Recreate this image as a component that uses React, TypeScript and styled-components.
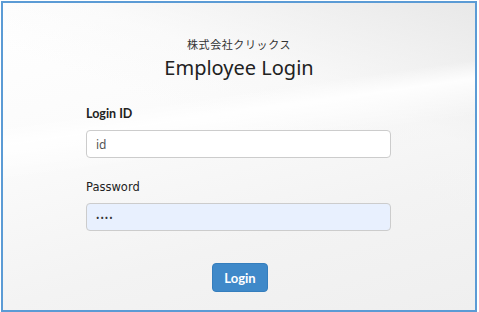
import React from "react";
import styled, {createGlobalStyle} from "styled-components";

const GlobalStyle = createGlobalStyle`
  html, body {
    margin: 0;
    padding: 0;
    background: #ffffff;
  }
  * {
    box-sizing: border-box;
  }
`

const App = () => {
    return (
        <>
            <GlobalStyle/>
            <Frame>
                <Header>
                    <Company>株式会社クリックス</Company>
                    <Title>Employee Login</Title>
                </Header>
                <Form onSubmit={(e) => e.preventDefault()}>
                    <Label bold={true}>Login ID</Label>
                    <Input type="text" placeholder="id"/>
                    <Label>Password</Label>
                    <Input type="password" defaultValue="pass" filled={true}/>
                    <ButtonRow>
                        <Button type="submit">Login</Button>
                    </ButtonRow>
                </Form>
            </Frame>
        </>
    )
}

export default App;

const Frame = styled.div`
  width: 476px;
  height: 311px;
  margin: 1px 2px 0 1px;
  border: 2px solid #5b9bd5;
  display: flex;
  flex-direction: column;
  background:
    linear-gradient(172deg, transparent 33%, rgba(255, 255, 255, 0.9) 38%, rgba(255, 255, 255, 0) 48%),
    linear-gradient(200deg, rgba(230, 230, 230, 0.9) 0%, rgba(245, 245, 245, 0.4) 30%, transparent 45%),
    linear-gradient(165deg, #ffffff 0%, #fbfbfb 35%, #f3f3f3 70%, #efefef 100%);
`
const Header = styled.div`
  display: flex;
  flex-direction: column;
  align-items: center;
  padding: 33px 0 0;
`
const Company = styled.p`
  margin: 0;
  font-family: "Noto Sans CJK JP", sans-serif;
  font-size: 11px;
  line-height: 16px;
  color: #333333;
  letter-spacing: 0.6px;
`
const Title = styled.h1`
  margin: 3px 0 0;
  font-family: "Noto Sans", "Noto Sans CJK JP", sans-serif;
  font-weight: 400;
  font-size: 20px;
  line-height: 26px;
  color: #222222;
  letter-spacing: 0;
`
const Form = styled.form`
  display: flex;
  flex-direction: column;
  width: 305px;
  margin: 25px 0 0 83px;
`
const Label = styled.label<{bold?: boolean}>`
  font-family: ${props => props.bold ? `"Lato", sans-serif` : `"DejaVu Sans", sans-serif`};
  font-weight: ${props => props.bold ? 700 : 400};
  font-size: ${props => props.bold ? "12.5px" : "11.5px"};
  line-height: 16px;
  color: #222222;
  margin: 0 0 8px;
`
const Input = styled.input<{filled?: boolean}>`
  width: 100%;
  height: 28px;
  margin: 0 0 21px;
  padding: 0 9px;
  border: 1px solid #cccccc;
  border-radius: 4px;
  background: ${props => props.filled ? "#e8f0fe" : "#ffffff"};
  font-family: "Noto Sans", sans-serif;
  font-size: ${props => props.filled ? "9px" : "12px"};
  color: #333333;
  letter-spacing: 1px;
  outline: none;

  &::placeholder {
    color: #555555;
    letter-spacing: 0;
  }
`
const ButtonRow = styled.div`
  display: flex;
  justify-content: center;
  margin: 11px 0 0;
  padding: 0 0 0 3px;
`
const Button = styled.button`
  width: 56px;
  height: 29px;
  border: 1px solid #357ebd;
  border-radius: 4px;
  background: #3f89c9;
  color: #ffffff;
  font-family: "Lato", sans-serif;
  font-weight: 700;
  font-size: 13px;
  cursor: pointer;
`
